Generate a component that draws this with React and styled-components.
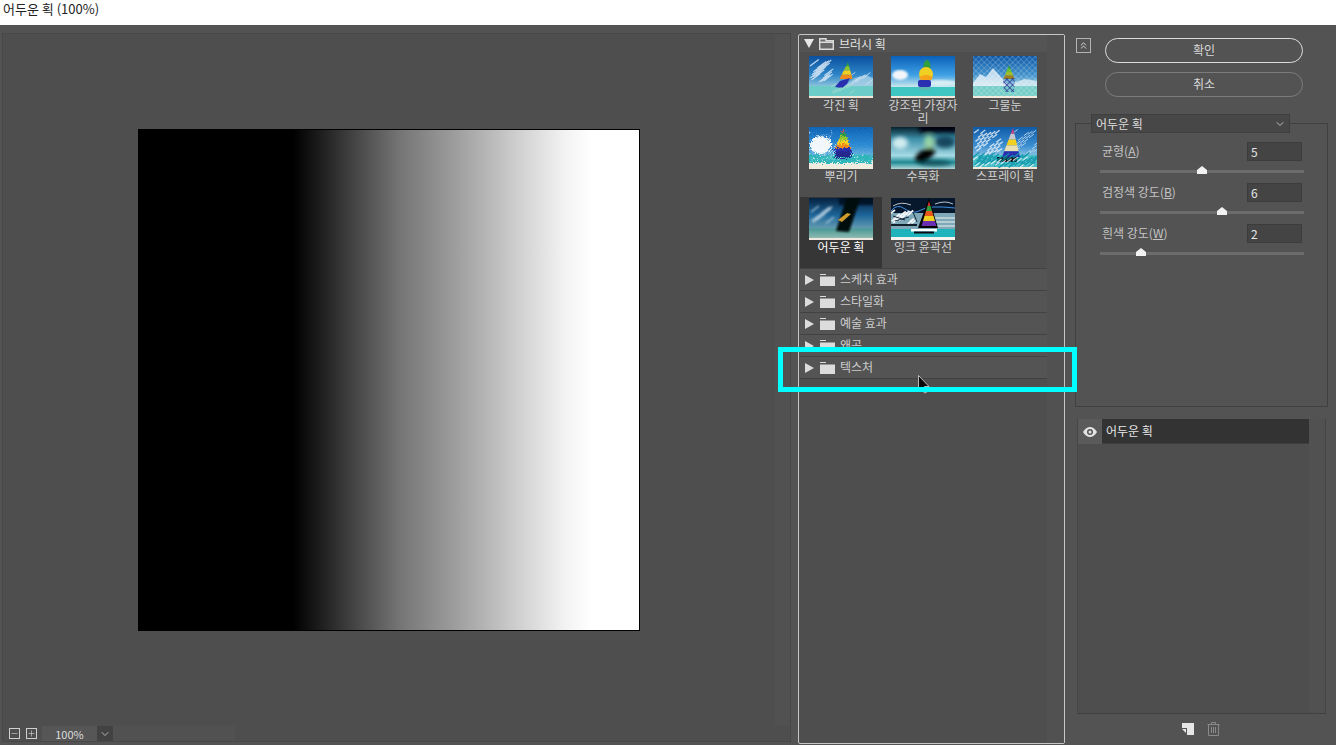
import React from 'react';
import styled, { createGlobalStyle } from 'styled-components';
import { ChevronDown, ChevronsUp, Minus, Plus } from 'lucide-react';

const brushes = [
  { name: '각진 획', kind: 'angled' },
  { name: '강조된 가장자리', kind: 'accent' },
  { name: '그물눈', kind: 'mesh' },
  { name: '뿌리기', kind: 'spatter' },
  { name: '수묵화', kind: 'sumi' },
  { name: '스프레이 획', kind: 'spray' },
  { name: '어두운 획', kind: 'dark', selected: true },
  { name: '잉크 윤곽선', kind: 'ink' },
];

const groups = ['스케치 효과', '스타일화', '예술 효과', '왜곡', '텍스처'];

const sliders = [
  { label: '균형', key: 'A', value: 5 },
  { label: '검정색 강도', key: 'B', value: 6 },
  { label: '흰색 강도', key: 'W', value: 2 },
];

const SAIL_COLORS = ['#d8386a', '#2f9e3f', '#8fc431', '#f0d020', '#f08a1c', '#2a2fb0'];

// triangular sail cut in colour bands
const Sail = ({ x = 38, y = 4, w = 12, h = 24, skew = 0, colors = SAIL_COLORS }) => (
  <g>
    {colors.map((c, i) => {
      const t0 = i / colors.length;
      const t1 = (i + 1) / colors.length;
      const y0 = y + h * t0;
      const y1 = y + h * t1;
      const s0 = skew * (1 - t0);
      const s1 = skew * (1 - t1);
      return (
        <polygon
          key={c}
          fill={c}
          points={`${x - (w / 2) * t0 + s0},${y0} ${x + (w / 2) * t0 + s0},${y0} ${x + (w / 2) * t1 + s1},${y1} ${x - (w / 2) * t1 + s1},${y1}`}
        />
      );
    })}
  </g>
);

// diagonal brush marks, spread with a fixed sequence so each render is the same
const Strokes = ({ count, color, opacity = 0.8, len = 8, width = 1, x0 = 0, x1 = 64, y0 = 0, y1 = 42, dx = 0.8 }) => {
  const marks = [];
  for (let i = 0; i < count; i++) {
    const x = x0 + ((i * 37) % 101) / 101 * (x1 - x0);
    const y = y0 + ((i * 59) % 97) / 97 * (y1 - y0);
    marks.push(<line key={i} x1={x} y1={y} x2={x + len * dx} y2={y - len * 0.6} />);
  }
  return <g stroke={color} strokeWidth={width} opacity={opacity}>{marks}</g>;
};

const Sky = ({ id, top = '#0b55a6', mid = '#3b93d6', low = '#a6d4e6' }) => (
  <linearGradient id={id} x1="0" y1="0" x2="0" y2="1">
    <stop offset="0" stopColor={top} />
    <stop offset="0.45" stopColor={mid} />
    <stop offset="0.72" stopColor={low} />
  </linearGradient>
);

const Base = ({ id, sea = '#63cfca', sand = '#f3e7da', horizon = 30 }) => (
  <>
    <rect width="64" height="42" fill={`url(#${id})`} />
    <rect y={horizon} width="64" height={42 - horizon} fill={sea} />
    <rect y="40" width="64" height="2" fill={sand} />
  </>
);

const ThumbArt = ({ kind }) => {
  const id = `sky-${kind}`;
  switch (kind) {
    case 'angled':
      return (
        <>
          <defs><Sky id={id} top="#0a4f9e" mid="#2f86c8" low="#8cc2dc" /></defs>
          <Base id={id} sea="#6ccdc8" />
          <polygon points="36,30 46,22 56,19 64,22 64,30" fill="#a8cfe6" opacity="0.8" />
          <Strokes count={20} color="#e8f2fa" x0={1} x1={16} y0={10} y1={27} len={11} width={1.2} />
          <Strokes count={10} color="#cfe4f0" x0={40} x1={58} y0={21} y1={30} len={8} />
          <Sail x={37} y={6} w={13} h={17} skew={2} colors={['#2f9e3f', '#8fc431', '#f0d020', '#f08a1c']} />
          <polygon points="26,31 31,25 41,22 38,28 33,32" fill="#2a2fb0" />
          <Strokes count={12} color="#a8dcd0" x0={22} x1={42} y0={31} y1={39} len={6} />
        </>
      );
    case 'accent':
      return (
        <>
          <defs>
            <Sky id={id} top="#0a60b8" mid="#3fa0e4" low="#c4e4ec" />
            <filter id="soft-accent"><feGaussianBlur stdDeviation="1.3" /></filter>
            <filter id="soft-sail"><feGaussianBlur stdDeviation="0.5" /></filter>
          </defs>
          <Base id={id} sea="#3fc6c2" horizon={31} />
          <ellipse cx="9" cy="19" rx="8" ry="5" fill="#f2f6f8" filter="url(#soft-accent)" />
          <ellipse cx="50" cy="27" rx="16" ry="3" fill="#d8eef4" filter="url(#soft-accent)" />
          <g filter="url(#soft-sail)">
            <ellipse cx="36" cy="10" rx="3.500" ry="6" fill="#2f9e3f" />
            <ellipse cx="35" cy="18" rx="7" ry="7" fill="#f0d020" />
            <ellipse cx="35" cy="22" rx="6.500" ry="3" fill="#f5a41c" />
            <rect x="27" y="24" width="13" height="7" rx="2" fill="#2a2fb0" />
          </g>
          <rect x="28" y="31" width="11" height="3" fill="#6fa9a8" opacity="0.6" />
        </>
      );
    case 'mesh':
      return (
        <>
          <defs>
            <Sky id={id} top="#0d58a6" mid="#3f90cc" low="#9ccfe0" />
            <pattern id="mesh" width="4" height="4" patternUnits="userSpaceOnUse" patternTransform="rotate(45)">
              <path d="M0 0H4M0 0V4" stroke="#ffffff" strokeWidth="0.9" opacity="0.42" />
            </pattern>
            <pattern id="mesh-dark" width="4" height="4" patternUnits="userSpaceOnUse" patternTransform="rotate(45)">
              <path d="M0 0H4M0 0V4" stroke="#1e2a90" strokeWidth="1.3" />
            </pattern>
          </defs>
          <Base id={id} sea="#74cdc8" />
          <polygon points="0,27 7,18 13,21 20,12 28,21 36,30 0,30" fill="#eef5fa" opacity="0.75" />
          <polygon points="40,27 52,23 64,25 64,30 40,30" fill="#dcedf4" opacity="0.75" />
          <rect width="64" height="42" fill="url(#mesh)" />
          <Sail x={36} y={9} w={11} h={14} colors={['#2f9e3f', '#6fc031', '#9fbc2a', '#a0801c']} />
          <polygon points="30,22 42,22 41,36 31,36" fill="url(#mesh-dark)" />
        </>
      );
    case 'spatter':
      return (
        <>
          <defs>
            <Sky id={id} top="#0a5cb0" mid="#2f8cd4" low="#7cc0e0" />
            <filter id="spatter" x="0" y="0" width="100%" height="100%">
              <feTurbulence type="fractalNoise" baseFrequency="0.8" numOctaves="2" seed="4" />
              <feDisplacementMap in="SourceGraphic" scale="8" xChannelSelector="R" yChannelSelector="G" />
            </filter>
          </defs>
          <g filter="url(#spatter)">
            <rect x="-4" y="-4" width="72" height="50" fill={`url(#${id})`} />
            <rect x="-4" y="28" width="72" height="18" fill="#2fb6bb" />
            <rect x="-4" y="36" width="72" height="10" fill="#f0ece0" />
            <ellipse cx="12" cy="18" rx="11" ry="9" fill="#f4f8fb" />
            <Strokes count={20} color="#e4f2f8" x0={0} x1={26} y0={6} y1={30} len={2} width={1.4} />
            <Strokes count={26} color="#d8f0ea" x0={0} x1={64} y0={28} y1={38} len={2} width={1.4} />
            <Sail x={34} y={1} w={18} h={24} />
            <rect x="26" y="24" width="16" height="7" fill="#26268f" />
          </g>
        </>
      );
    case 'sumi':
      return (
        <>
          <defs>
            <linearGradient id={id} x1="0" y1="0" x2="0" y2="1">
              <stop offset="0" stopColor="#07222e" />
              <stop offset="0.28" stopColor="#3c8ea8" />
              <stop offset="0.68" stopColor="#a4dae4" />
              <stop offset="0.84" stopColor="#1f8a94" />
              <stop offset="1" stopColor="#b4d8da" />
            </linearGradient>
            <filter id="soft-sumi"><feGaussianBlur stdDeviation="2.2" /></filter>
          </defs>
          <rect width="64" height="42" fill={`url(#${id})`} />
          <g filter="url(#soft-sumi)">
            <rect x="28" y="-3" width="38" height="8" fill="#01060a" />
            <ellipse cx="54" cy="15" rx="10" ry="6" fill="#14465e" />
            <ellipse cx="44" cy="36" rx="16" ry="2.500" fill="#0d4a55" />
            <ellipse cx="9" cy="16" rx="8" ry="6" fill="#d2ecf0" />
            <ellipse cx="38" cy="15" rx="5" ry="7" fill="#a8e0a0" opacity="0.8" />
            <ellipse cx="34" cy="28" rx="11" ry="5.500" transform="rotate(-30 34 28)" fill="#020202" />
          </g>
        </>
      );
    case 'spray':
      return (
        <>
          <defs><Sky id={id} top="#0f5aa6" mid="#3c8fd2" low="#94c8e4" /></defs>
          <Base id={id} sea="#48bfc8" horizon={28} />
          <Strokes count={30} color="#f0f6fb" x0={1} x1={26} y0={6} y1={28} len={6} width={1.3} />
          <Strokes count={20} color="#cfe4f2" x0={40} x1={62} y0={6} y1={28} len={6} />
          <Sail x={38} y={1} w={18} h={29} skew={2} colors={['#c83a78', '#c8c8d0', '#f0d020', '#e8e0b0', '#2a2fb0']} />
          <rect x="24" y="30" width="20" height="5" fill="#0e0e14" />
          <Strokes count={34} color="#0f93a8" x0={0} x1={60} y0={30} y1={41} len={8} width={1.4} opacity={0.9} />
          <Strokes count={14} color="#f4f8fa" x0={0} x1={60} y0={33} y1={42} len={6} width={1.2} />
        </>
      );
    case 'dark':
      return (
        <>
          <defs>
            <linearGradient id={id} x1="0" y1="0" x2="0" y2="1">
              <stop offset="0" stopColor="#06223f" />
              <stop offset="0.4" stopColor="#1c6498" />
              <stop offset="0.7" stopColor="#5e98b0" />
              <stop offset="0.74" stopColor="#4d9a96" />
              <stop offset="0.94" stopColor="#8ab8b0" />
              <stop offset="0.95" stopColor="#f0e8de" />
            </linearGradient>
            <filter id="soft-dark"><feGaussianBlur stdDeviation="0.9" /></filter>
          </defs>
          <rect width="64" height="42" fill={`url(#${id})`} />
          <g filter="url(#soft-dark)">
            <Strokes count={12} color="#c8dcea" x0={2} x1={18} y0={14} y1={27} len={10} width={1.5} />
            <rect x="30" y="-2" width="36" height="9" fill="#03121f" opacity="0.85" />
            <polygon points="38,-2 52,-2 40,34 27,33" fill="#060808" />
          </g>
          <polygon points="29,22 38,15 42,16 33,24" fill="#d09a2c" />
        </>
      );
    default:
      return (
        <>
          <rect width="64" height="42" fill="#07172c" />
          <rect y="15" width="64" height="16" fill="#7fa8b8" />
          <rect y="31" width="64" height="8" fill="#1fb4bc" />
          <rect y="39" width="64" height="3" fill="#f4f4f0" />
          <path d="M0 13 Q6 5 14 11 T30 12 T64 10" fill="none" stroke="#3f8fe0" strokeWidth="1" />
          <path d="M2 8 Q10 3 20 7 M44 6 Q54 2 62 6" fill="none" stroke="#e8f0f8" strokeWidth="0.8" />
          <Strokes count={18} color="#f4f8fa" x0={0} x1={22} y0={15} y1={27} len={5} width={1.8} opacity={1} />
          <path d="M2 18 L14 22 M4 23 L18 19 M22 14 L26 24" stroke="#07172c" strokeWidth="0.9" />
          <rect y="26" width="26" height="2" fill="#10202c" />
          <path d="M44 20 H64 M42 24 H64 M44 28 H64" stroke="#eef2f4" strokeWidth="1" />
          <polygon points="38,0 47,30 27,30" fill="#050505" />
          <Sail x={38} y={3} w={15} h={25} colors={['#d03030', '#2f9e3f', '#e85a1c', '#f0d020', '#6a2fb0']} />
          <rect x="20" y="31" width="26" height="2.500" fill="#ffffff" />
          <rect x="23" y="33.500" width="20" height="2" fill="#0a0a10" />
        </>
      );
  }
};

const App = () => (
  <>
    <GlobalStyle />
    <Page>
      <TitleBar>어두운 획 (100%)</TitleBar>
      <Body>
        <PreviewPane>
          <PreviewRow>
            <Canvas>
              <PreviewImage />
            </Canvas>
            <VerticalTrack />
          </PreviewRow>
          <PreviewFooter>
            <ZoomButton><Minus size={9} strokeWidth={1.5} /></ZoomButton>
            <ZoomButton><Plus size={9} strokeWidth={1.5} /></ZoomButton>
            <ZoomField>100%</ZoomField>
            <ZoomDrop><ChevronDown size={12} strokeWidth={1.6} /></ZoomDrop>
            <HorizontalTrack />
          </PreviewFooter>
        </PreviewPane>

        <Gallery>
          <GalleryList>
            <GroupHeader $first>
              <svg width="10" height="9" viewBox="0 0 10 9"><polygon points="0,0 10,0 5,9" fill="#e8e8e8" /></svg>
              <svg width="15" height="12" viewBox="0 0 15 12">
                <path d="M.7 11.300V.7H7V2.700H14.300V11.300Z" fill="#6a6a6a" stroke="#dcdcdc" strokeWidth="1.400" />
                <path d="M0 3.500H15V5H0Z" fill="#dcdcdc" />
              </svg>
              <GroupName $open>브러시 획</GroupName>
            </GroupHeader>
            <BrushGrid>
              {brushes.map((b) => (
                <BrushCell key={b.name} $selected={b.selected}>
                  <ThumbSvg viewBox="0 0 64 42"><ThumbArt kind={b.kind} /></ThumbSvg>
                  <BrushLabel $selected={b.selected}>{b.name}</BrushLabel>
                </BrushCell>
              ))}
            </BrushGrid>
            {groups.map((g) => (
              <GroupHeader key={g}>
                <svg width="10" height="10" viewBox="0 0 10 10"><polygon points="0,0 9,5 0,10" fill="#dcdcdc" /></svg>
                <svg width="15" height="12" viewBox="0 0 15 12">
                  <path d="M0 0H6V1H0Z M0 2.500H15V12H0Z" fill="#dcdcdc" />
                </svg>
                <GroupName>{g}</GroupName>
              </GroupHeader>
            ))}
          </GalleryList>
          <GalleryTrack />
        </Gallery>

        <SidePanel>
          <TopControls>
            <CollapseButton><ChevronsUp size={11} strokeWidth={2} /></CollapseButton>
            <ButtonStack>
              <PillButton $primary>확인</PillButton>
              <PillButton>취소</PillButton>
            </ButtonStack>
          </TopControls>

          <Settings>
            <FilterSelect>
              <span>어두운 획</span>
              <ChevronDown size={12} strokeWidth={1.5} />
            </FilterSelect>
            {sliders.map((s) => (
              <SliderRow key={s.key}>
                <SliderHead>
                  <SliderLabel>{s.label}(<u>{s.key}</u>)</SliderLabel>
                  <ValueBox>{s.value}</ValueBox>
                </SliderHead>
                <SliderTrack>
                  <SliderThumb $pos={s.value * 10} viewBox="0 0 10 8">
                    <polygon points="5,0 10,4 10,8 0,8 0,4" fill="#f2f2f2" />
                  </SliderThumb>
                </SliderTrack>
              </SliderRow>
            ))}
          </Settings>

          <LayerPanel>
            <LayerColumn>
              <LayerRow>
                <EyeCell>
                  <svg width="14" height="10" viewBox="0 0 14 10">
                    <path d="M0 5C2 1.500 4.500 0 7 0s5 1.500 7 5c-2 3.500-4.500 5-7 5S2 8.500 0 5Z" fill="#e4e4e4" />
                    <circle cx="7" cy="5" r="3" fill="#555" />
                    <circle cx="7" cy="5" r="1.500" fill="#e4e4e4" />
                  </svg>
                </EyeCell>
                <LayerName>어두운 획</LayerName>
              </LayerRow>
            </LayerColumn>
            <LayerTrack />
          </LayerPanel>

          <LayerActions>
            <svg width="12" height="12" viewBox="0 0 12 12">
              <path d="M0 0H12V12H5V5H0Z" fill="#e6e6e6" />
              <path d="M0 6H4V10Z" fill="#e6e6e6" />
            </svg>
            <svg width="13" height="14" viewBox="0 0 13 14" fill="none" stroke="#8a8a8a">
              <path d="M.5 2.500H12.500M4.500 2.500V.5H8.500V2.500M1.500 2.500V13.500H11.500V2.500M4.500 5V11M6.500 5V11M8.500 5V11" />
            </svg>
          </LayerActions>
        </SidePanel>
      </Body>

      <Cursor width="12" height="19" viewBox="0 0 12 19">
        <path d="M.5.5V15L4 12L6.500 18L9 17L6.500 11.500H11Z" fill="#0a0a0a" stroke="#dddddd" strokeWidth="0.8" />
      </Cursor>
      <Highlight />
    </Page>
  </>
);

const GlobalStyle = createGlobalStyle`
  html, body {
    margin: 0;
    padding: 0;
    background: #ffffff;
  }
  * {
    box-sizing: border-box;
  }
  body {
    font-family: "Noto Sans CJK KR", "Noto Sans", "Liberation Sans", sans-serif;
  }
`;

const Page = styled.div`
  position: relative;
  display: flex;
  flex-direction: column;
  width: 1336px;
  height: 745px;
  overflow: hidden;
`;

const TitleBar = styled.div`
  flex: 0 0 25px;
  height: 25px;
  padding: 0 0 7px 3px;
  display: flex;
  align-items: center;
  background: #ffffff;
  color: #222222;
  font-size: 13px;
  line-height: 16px;
`;

const Body = styled.div`
  flex: 1;
  display: flex;
  align-items: flex-start;
  background: #535353;
  color: #d6d6d6;
  font-size: 12px;
`;

const PreviewPane = styled.div`
  display: flex;
  flex-direction: column;
  width: 789px;
  height: 709px;
  margin: 8px 0 0 2px;
  background: #4e4e4e;
  border: 1px solid #474747;
`;

const PreviewRow = styled.div`
  flex: 1;
  display: flex;
`;

const Canvas = styled.div`
  flex: 1;
  display: flex;
  align-items: center;
  justify-content: center;
`;

const PreviewImage = styled.div`
  width: 502px;
  height: 502px;
  border: 1px solid #000000;
  background: linear-gradient(
    to right,
    #000000 0,
    #000000 154px,
    #1c1c1c 180px,
    #444444 215px,
    #747474 260px,
    #a0a0a0 320px,
    #d4d4d4 385px,
    #f2f2f2 425px,
    #ffffff 452px
  );
`;

const VerticalTrack = styled.div`
  flex: 0 0 15px;
  background: #515151;
`;

const PreviewFooter = styled.div`
  flex: 0 0 15px;
  display: flex;
  align-items: center;
  padding-left: 6px;
`;

const ZoomButton = styled.div`
  flex: 0 0 11px;
  height: 11px;
  margin-right: 6px;
  display: flex;
  align-items: center;
  justify-content: center;
  border: 1px solid #cfcfcf;
  color: #e0e0e0;
`;

const ZoomField = styled.div`
  flex: 0 0 55px;
  height: 15px;
  margin-left: -1px;
  display: flex;
  align-items: center;
  justify-content: center;
  background: #565656;
  color: #dcdcdc;
  font-size: 11px;
`;

const ZoomDrop = styled.div`
  flex: 0 0 16px;
  height: 15px;
  display: flex;
  align-items: center;
  justify-content: center;
  background: #424242;
  color: #d0d0d0;
`;

const HorizontalTrack = styled.div`
  flex: 0 0 122px;
  height: 15px;
  background: #515151;
`;

const Gallery = styled.div`
  display: flex;
  width: 267px;
  height: 710px;
  margin: 9px 0 0 7px;
  padding-left: 1px;
  background: #4e4e4e;
  border: 1px solid #c6c6c6;
  border-radius: 2px;
`;

const GalleryList = styled.div`
  flex: 0 0 247px;
  display: flex;
  flex-direction: column;
`;

const GalleryTrack = styled.div`
  flex: 1;
  background: #515151;
`;

const GroupHeader = styled.div`
  flex: 0 0 ${({ $first }) => ($first ? '18px' : '22px')};
  display: flex;
  align-items: center;
  gap: 5px;
  padding-left: 5px;
  background: #545454;
  border-bottom: 1px solid ${({ $first }) => ($first ? '#4e4e4e' : '#424242')};

  &:first-child {
    padding-left: 4px;
  }
`;

const GroupName = styled.span`
  margin-top: ${({ $open }) => ($open ? '0' : '-2px')};
  color: ${({ $open }) => ($open ? '#e0e0e0' : '#cecece')};
  font-size: 12px;
  line-height: 1;
`;

const BrushGrid = styled.div`
  display: grid;
  grid-template-columns: repeat(3, 82px);
  grid-auto-rows: 71px;
  padding-top: 2px;
  border-bottom: 1px solid #424242;
`;

const BrushCell = styled.div`
  display: flex;
  flex-direction: column;
  align-items: center;
  padding: 1px 5px 0;
  background: ${({ $selected }) => ($selected ? '#363636' : 'transparent')};
`;

const ThumbSvg = styled.svg`
  display: block;
  flex: 0 0 42px;
  width: 64px;
  height: 42px;
`;

const BrushLabel = styled.div`
  width: 72px;
  color: ${({ $selected }) => ($selected ? '#ffffff' : '#d2d2d2')};
  font-size: 12px;
  line-height: 13px;
  text-align: center;
  word-break: break-all;
`;

const SidePanel = styled.div`
  display: flex;
  flex-direction: column;
  width: 253px;
  margin: 13px 0 0 10px;
`;

const TopControls = styled.div`
  display: flex;
  align-items: flex-start;
  padding-left: 1px;
`;

const CollapseButton = styled.div`
  flex: 0 0 15px;
  height: 15px;
  display: flex;
  align-items: center;
  justify-content: center;
  border: 1px solid #b4b4b4;
  color: #dedede;
`;

const ButtonStack = styled.div`
  display: flex;
  flex-direction: column;
  gap: 9px;
  margin-left: 14px;
`;

const PillButton = styled.div`
  width: 198px;
  height: 25px;
  padding-bottom: 2px;
  display: flex;
  align-items: center;
  justify-content: center;
  border: 1px solid ${({ $primary }) => ($primary ? '#dcdcdc' : '#7c7c7c')};
  border-radius: 13px;
  color: #d8d8d8;
  font-size: 12px;
`;

const Settings = styled.fieldset`
  display: block;
  width: 253px;
  height: 293px;
  min-width: 0;
  margin: 17px 0 0;
  padding: 9px 23px 0 24px;
  border: 1px solid #404040;
`;

const FilterSelect = styled.legend`
  display: flex;
  align-items: center;
  justify-content: space-between;
  width: 199px;
  height: 19px;
  margin-left: -9px;
  padding: 0 3px 0 4px;
  background: #474747;
  border: 1px solid #3f3f3f;
  color: #dedede;
  font-size: 12px;
  line-height: 16px;
`;

const SliderRow = styled.div`
  height: 41px;
`;

const SliderHead = styled.div`
  display: flex;
  align-items: center;
  justify-content: space-between;
  height: 19px;
  padding: 0 2px;
`;

const SliderLabel = styled.span`
  margin-top: -2px;
  color: #c4c4c4;
  font-size: 12px;
`;

const ValueBox = styled.div`
  width: 55px;
  height: 19px;
  padding-left: 3px;
  display: flex;
  align-items: center;
  background: #444444;
  border: 1px solid #3c3c3c;
  color: #e6e6e6;
  font-size: 12px;
`;

const SliderTrack = styled.div`
  position: relative;
  width: 204px;
  height: 3px;
  margin-top: 9px;
  background: #6c6c6c;
`;

const SliderThumb = styled.svg`
  position: absolute;
  left: ${({ $pos }) => $pos}%;
  top: -4px;
  width: 10px;
  height: 8px;
  margin-left: -5px;
`;

const LayerPanel = styled.div`
  display: flex;
  width: 249px;
  height: 295px;
  margin: 12px 0 0 2px;
  background: #4e4e4e;
  border-left: 1px solid #464646;
  border-right: 1px solid #444444;
  border-bottom: 1px solid #404040;
`;

const LayerColumn = styled.div`
  flex: 0 0 231px;
  background: #4e4e4e;
`;

const LayerRow = styled.div`
  display: flex;
  height: 25px;
`;

const EyeCell = styled.div`
  flex: 0 0 24px;
  display: flex;
  align-items: center;
  justify-content: center;
  background: #5a5a5a;
`;

const LayerName = styled.div`
  flex: 1;
  display: flex;
  align-items: center;
  padding: 0 0 2px 4px;
  background: #333333;
  border-bottom: 1px solid #3e3e3e;
  color: #e6e6e6;
  font-size: 12px;
`;

const LayerTrack = styled.div`
  flex: 1;
  background: #515151;
`;

const LayerActions = styled.div`
  display: flex;
  align-items: center;
  gap: 13px;
  margin: 8px 0 0 107px;
`;

const Cursor = styled.svg`
  position: absolute;
  left: 918px;
  top: 375px;
`;

const Highlight = styled.div`
  position: absolute;
  left: 778px;
  top: 347px;
  width: 299px;
  height: 45px;
  border: 5px solid #00ffff;
  pointer-events: none;
`;

export default App;
